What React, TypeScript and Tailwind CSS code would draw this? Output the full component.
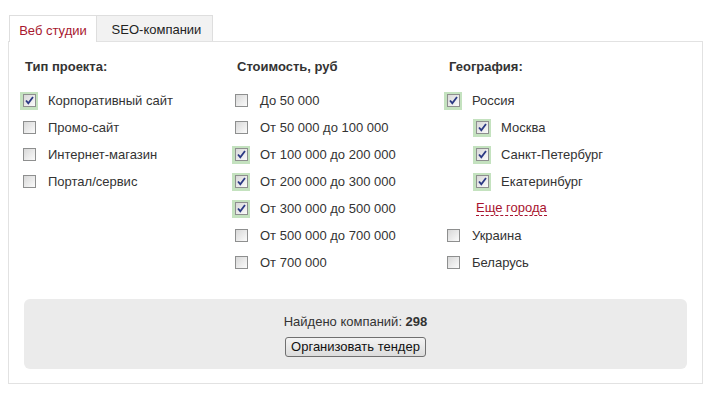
import React from "react";

function Box({ checked }: { checked?: boolean }) {
  return (
    <span
      className={
        "flex h-[18px] w-[18px] shrink-0 items-center justify-center " +
        (checked ? "bg-[#c4e2bf]" : "")
      }
    >
      <span className="flex h-[13px] w-[13px] items-center justify-center border border-[#8e8f8f] bg-gradient-to-br from-[#d8d8d8] to-[#fbfbfb]">
        {checked && (
          <svg width="11" height="11" viewBox="0 0 11 11">
            <path d="M2 5.5 L4.3 8.2 L9 2" fill="none" stroke="#2b3a84" strokeWidth="1.8" />
          </svg>
        )}
      </span>
    </span>
  );
}

function Row({ label, checked, nested }: { label: string; checked?: boolean; nested?: boolean }) {
  return (
    <div className={"flex h-[27px] items-center gap-[10px] " + (nested ? "pl-[29px]" : "")}>
      <Box checked={checked} />
      <span className="leading-[16px]">{label}</span>
    </div>
  );
}

function Heading({ children }: { children: React.ReactNode }) {
  return <div className="mb-[12px] ml-[5px] h-[16px] font-bold leading-[16px]">{children}</div>;
}

export default function App() {
  return (
    <div className="h-[398px] w-[712px] bg-white px-[8px] pt-[15px] font-['Liberation_Sans',Arial,sans-serif] text-[13px] text-[#333]">
      <div className="flex pl-[1px]">
        <div className="relative z-10 -mb-px flex h-[27px] w-[88px] items-center justify-center border border-b-0 border-[#dedede] bg-white pt-[3px] text-[#a8182f]">
          Веб студии
        </div>
        <div className="flex h-[26px] w-[116px] items-center justify-center border-r border-t border-[#dedede] bg-[#f2f2f2] pt-[3px] pl-[4px] text-[#222]">
          SEO-компании
        </div>
      </div>
      <div className="flex h-[343px] w-[695px] flex-col border border-[#e2e2e2] pl-[11px] pr-[15px] pt-[17px]">
        <div className="flex">
          <div className="w-[212px]">
            <Heading>Тип проекта:</Heading>
            <Row label="Корпоративный сайт" checked />
            <Row label="Промо-сайт" />
            <Row label="Интернет-магазин" />
            <Row label="Портал/сервис" />
          </div>
          <div className="w-[212px]">
            <Heading>Стоимость, руб</Heading>
            <Row label="До 50 000" />
            <Row label="От 50 000 до 100 000" />
            <Row label="От 100 000 до 200 000" checked />
            <Row label="От 200 000 до 300 000" checked />
            <Row label="От 300 000 до 500 000" checked />
            <Row label="От 500 000 до 700 000" />
            <Row label="От 700 000" />
          </div>
          <div className="flex-1">
            <Heading>География:</Heading>
            <Row label="Россия" checked />
            <Row label="Москва" checked nested />
            <Row label="Санкт-Петербург" checked nested />
            <Row label="Екатеринбург" checked nested />
            <div className="flex h-[27px] items-center pl-[32px]">
              <span className="border-b border-dashed border-[#a8122e] leading-[14px] text-[#a8122e]">Еще города</span>
            </div>
            <Row label="Украина" />
            <Row label="Беларусь" />
          </div>
        </div>
        <div className="ml-[4px] mt-auto mb-[14px] flex h-[70px] flex-col items-center rounded-[6px] bg-[#ebebeb] pt-[15px]">
          <div className="leading-[16px]">
            Найдено компаний: <b>298</b>
          </div>
          <button className="mt-[7px] h-[20px] w-[141px] rounded-[3px] border border-[#707070] bg-gradient-to-b from-[#f4f4f4] to-[#dcdcdc] text-[13px] leading-[16px] text-[#111]">
            Организовать тендер
          </button>
        </div>
      </div>
    </div>
  );
}
